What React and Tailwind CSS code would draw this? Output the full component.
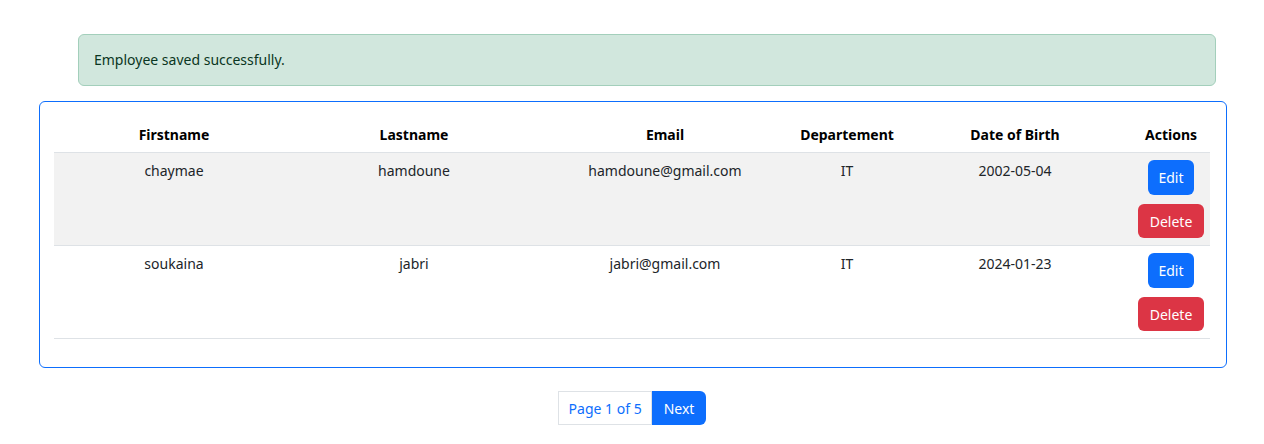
import React from "react";

const rows = [
  { first: "chaymae", last: "hamdoune", email: "hamdoune@gmail.com", dept: "IT", dob: "2002-05-04" },
  { first: "soukaina", last: "jabri", email: "jabri@gmail.com", dept: "IT", dob: "2024-01-23" },
];

export default function App() {
  return (
    <div className="w-[1264px] h-[444px] bg-white text-[14px] leading-[21px] text-[#212529]" style={{ fontFamily: '"Noto Sans", "Open Sans", sans-serif' }}>
      <div className="pt-[34px]">
        <div className="ml-[78px] w-[1138px] rounded-[6px] border border-[#a3cfbb] bg-[#d1e7dd] px-[15px] py-[14px] leading-[22px] text-[#0a3622]">
          Employee saved successfully.
        </div>
        <div className="ml-[39px] mt-[15px] w-[1188px] rounded-[6px] border border-[#0d6efd] pl-[14px] pr-[15px] pt-[14px] pb-[28px]">
          <table className="w-[1156px] table-fixed border-collapse text-center">
            <colgroup>
              <col className="w-[240px]" />
              <col className="w-[240px]" />
              <col className="w-[262px]" />
              <col className="w-[102px]" />
              <col className="w-[234px]" />
              <col className="w-[78px]" />
            </colgroup>
            <thead>
              <tr className="border-b border-[#dee2e6]">
                {["Firstname", "Lastname", "Email", "Departement", "Date of Birth", "Actions"].map((h) => (
                  <th key={h} className="pt-[8px] pb-[7px] font-bold text-black">{h}</th>
                ))}
              </tr>
            </thead>
            <tbody>
              {rows.map((r, i) => (
                <tr key={i} className={`border-b border-[#dee2e6] ${i === 0 ? "bg-[#f2f2f2]" : "bg-white"}`}>
                  <td className="py-[7px] align-top">{r.first}</td>
                  <td className="py-[7px] align-top">{r.last}</td>
                  <td className="py-[7px] align-top">{r.email}</td>
                  <td className="py-[7px] align-top">{r.dept}</td>
                  <td className="py-[7px] align-top">{r.dob}</td>
                  <td className="py-[7px] align-top">
                    <div className="flex flex-col items-center gap-[9px]">
                      <button className="h-[35px] rounded-[6px] bg-[#0d6efd] px-[10.5px] text-white">Edit</button>
                      <button className="h-[34px] rounded-[6px] bg-[#dc3545] px-[11.5px] text-white">Delete</button>
                    </div>
                  </td>
                </tr>
              ))}
            </tbody>
          </table>
        </div>
        <div className="mt-[23px] flex justify-center">
          <div className="flex h-[34px]">
            <span className="flex items-center border border-[#dee2e6] px-[9.5px] text-[#0d6efd]">Page 1 of 5</span>
            <button className="flex items-center rounded-r-[6px] bg-[#0d6efd] px-[11.5px] text-white">Next</button>
          </div>
        </div>
      </div>
    </div>
  );
}
